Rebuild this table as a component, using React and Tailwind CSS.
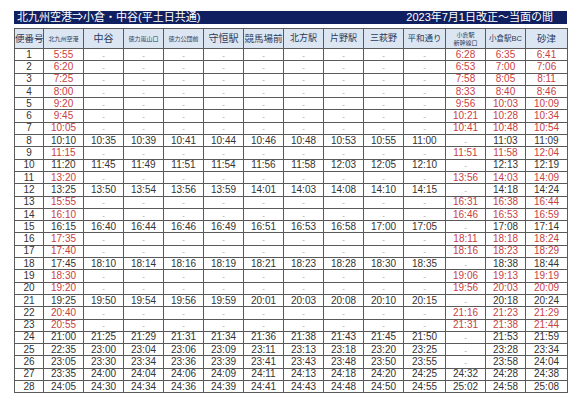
const RED = "text-[#c8413f]";

// red rows: [no, 空港, 新幹線口, 小倉駅BC, 砂津]
const express = {
  1: ["5:55", "6:28", "6:35", "6:41"],
  2: ["6:20", "6:53", "7:00", "7:06"],
  3: ["7:25", "7:58", "8:05", "8:11"],
  4: ["8:00", "8:33", "8:40", "8:46"],
  5: ["9:20", "9:56", "10:03", "10:09"],
  6: ["9:45", "10:21", "10:28", "10:34"],
  7: ["10:05", "10:41", "10:48", "10:54"],
  9: ["11:15", "11:51", "11:58", "12:04"],
  11: ["13:20", "13:56", "14:03", "14:09"],
  13: ["15:55", "16:31", "16:38", "16:44"],
  14: ["16:10", "16:46", "16:53", "16:59"],
  16: ["17:35", "18:11", "18:18", "18:24"],
  17: ["17:40", "18:16", "18:23", "18:29"],
  19: ["18:30", "19:06", "19:13", "19:19"],
  20: ["19:20", "19:56", "20:03", "20:09"],
  22: ["20:40", "21:16", "21:23", "21:29"],
  23: ["20:55", "21:31", "21:38", "21:44"],
};

const local = {
  8: ["10:10", "10:35", "10:39", "10:41", "10:44", "10:46", "10:48", "10:53", "10:55", "11:00", "-", "11:03", "11:09"],
  10: ["11:20", "11:45", "11:49", "11:51", "11:54", "11:56", "11:58", "12:03", "12:05", "12:10", "-", "12:13", "12:19"],
  12: ["13:25", "13:50", "13:54", "13:56", "13:59", "14:01", "14:03", "14:08", "14:10", "14:15", "-", "14:18", "14:24"],
  15: ["16:15", "16:40", "16:44", "16:46", "16:49", "16:51", "16:53", "16:58", "17:00", "17:05", "-", "17:08", "17:14"],
  18: ["17:45", "18:10", "18:14", "18:16", "18:19", "18:21", "18:23", "18:28", "18:30", "18:35", "-", "18:38", "18:44"],
  21: ["19:25", "19:50", "19:54", "19:56", "19:59", "20:01", "20:03", "20:08", "20:10", "20:15", "-", "20:18", "20:24"],
  24: ["21:00", "21:25", "21:29", "21:31", "21:34", "21:36", "21:38", "21:43", "21:45", "21:50", "-", "21:53", "21:59"],
  25: ["22:35", "23:00", "23:04", "23:06", "23:09", "23:11", "23:13", "23:18", "23:20", "23:25", "-", "23:28", "23:34"],
  26: ["23:05", "23:30", "23:34", "23:36", "23:39", "23:41", "23:43", "23:48", "23:50", "23:55", "-", "23:58", "24:04"],
  27: ["23:35", "24:00", "24:04", "24:06", "24:09", "24:11", "24:13", "24:18", "24:20", "24:25", "24:32", "24:28", "24:38"],
  28: ["24:05", "24:30", "24:34", "24:36", "24:39", "24:41", "24:43", "24:48", "24:50", "24:55", "25:02", "24:58", "25:08"],
};

const widths = [29, 40, 40, 40, 40, 40, 40, 40, 40, 40, 42, 40, 40, 42];

const cell = "border border-[#5a5a5a] p-0 text-center align-middle whitespace-nowrap";

const Dash = () => <span className="text-[#a0a0a0] text-[8px]">-</span>;

const Row = ({ n }) => {
  let cells;
  if (express[n]) {
    const [dep, a, b, c] = express[n];
    cells = [
      <span className={RED}>{dep}</span>,
      ...Array(9).fill(0).map(() => <Dash />),
      <span className={RED}>{a}</span>,
      <span className={RED}>{b}</span>,
      <span className={RED}>{c}</span>,
    ];
  } else {
    cells = local[n].map((t) => (t === "-" ? <Dash /> : <span>{t}</span>));
  }
  return (
    <tr className="h-[12.3px]">
      <td className={cell}>{n}</td>
      {cells.map((c, i) => (
        <td key={i} className={cell}>
          {c}
        </td>
      ))}
    </tr>
  );
};

const Header = () => (
  <tr className="h-[20px] bg-[#dce6f2] text-[#2a3a5a]">
    <th className={`${cell} font-normal text-[9.5px]`}>便番号</th>
    <th className={`${cell} font-normal text-[6px]`}>北九州空港</th>
    <th className={`${cell} font-normal text-[10px]`}>中谷</th>
    <th className={`${cell} font-normal text-[6px]`}>徳力嵐山口</th>
    <th className={`${cell} font-normal text-[6px]`}>徳力公団前</th>
    <th className={`${cell} font-normal text-[10px]`}>守恒駅</th>
    <th className={`${cell} font-normal text-[9.5px]`}>競馬場前</th>
    <th className={`${cell} font-normal text-[9px]`}>北方駅</th>
    <th className={`${cell} font-normal text-[9px]`}>片野駅</th>
    <th className={`${cell} font-normal text-[9px]`}>三萩野</th>
    <th className={`${cell} font-normal text-[8.5px]`}>平和通り</th>
    <th className={`${cell} font-normal text-[6px] leading-[8px]`}>
      小倉駅
      <br />
      新幹線口
    </th>
    <th className={`${cell} font-normal text-[7.5px]`}>小倉駅BC</th>
    <th className={`${cell} font-normal text-[9.5px]`}>砂津</th>
  </tr>
);

export default function App() {
  return (
    <div
      className="w-[580px] h-[403px] bg-white pt-[11px] pl-[14px]"
      style={{ fontFamily: '"Liberation Sans", "Noto Sans CJK JP", sans-serif' }}
    >
      <div className="w-[553px] h-[13px] bg-[#101f5f] text-white flex items-center justify-between pl-[3px] pr-[14px] text-[11px] leading-none">
        <span>北九州空港⇒小倉・中谷(平土日共通)</span>
        <span>2023年7月1日改正～当面の間</span>
      </div>
      <table className="mt-[4px] w-[553px] table-fixed border-collapse border border-[#444] text-[10px] leading-none text-[#333]">
        <colgroup>
          {widths.map((w, i) => (
            <col key={i} style={{ width: w }} />
          ))}
        </colgroup>
        <thead>
          <Header />
        </thead>
        <tbody>
          {Array.from({ length: 28 }, (_, i) => (
            <Row key={i} n={i + 1} />
          ))}
        </tbody>
      </table>
    </div>
  );
}
